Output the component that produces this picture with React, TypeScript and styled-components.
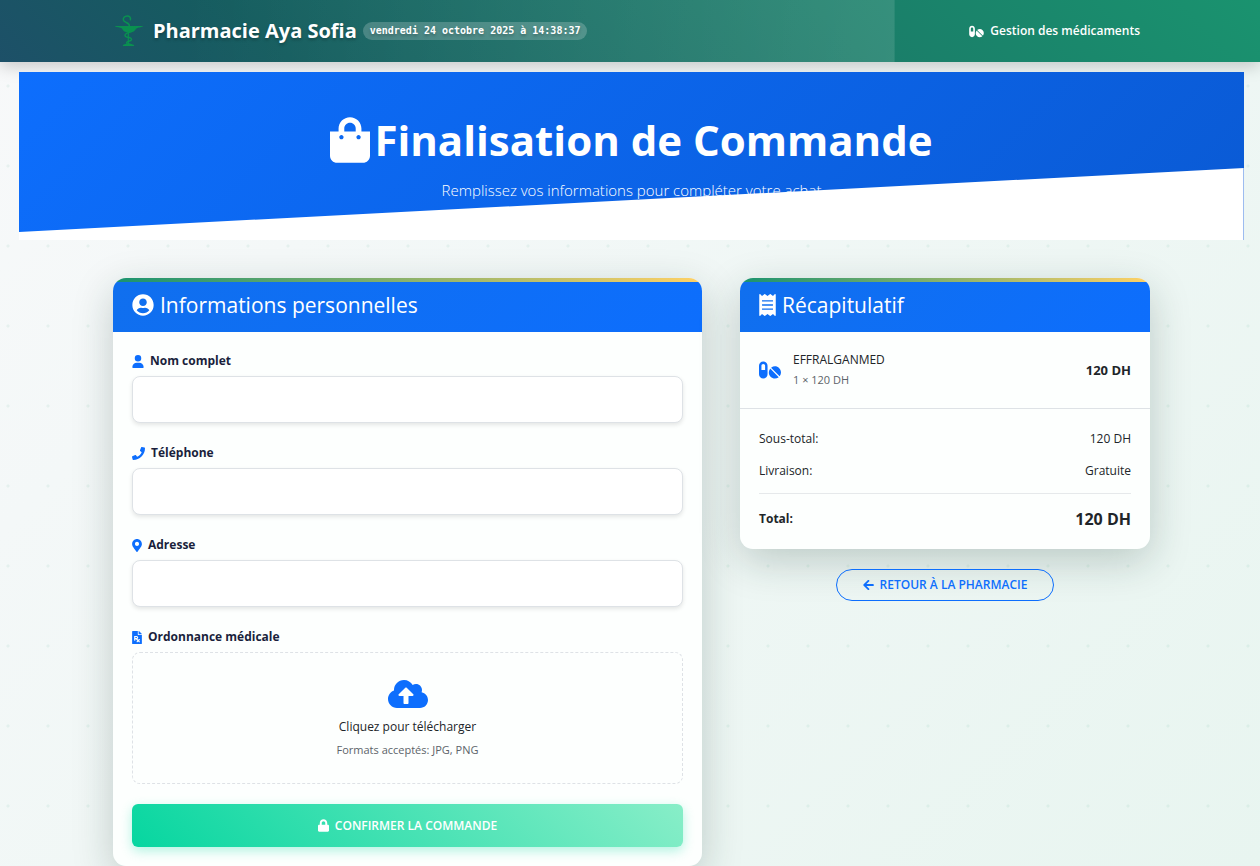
import React from "react";
import styled, { createGlobalStyle } from "styled-components";
import {
  FaArrowLeft,
  FaCloudUploadAlt,
  FaFilePrescription,
  FaLock,
  FaMapMarkerAlt,
  FaPhone,
  FaPills,
  FaReceipt,
  FaShoppingBag,
  FaUserCircle,
} from "react-icons/fa";
import { FaUser } from "react-icons/fa6";

const blue = "#0d6efd";
const ink = "#212529";
const navy = "#1a1f3c";

const GlobalStyle = createGlobalStyle`
  *, *::before, *::after { box-sizing: border-box; }
  html { min-height: 100%; }
  body {
    margin: 0;
    min-height: 100vh;
    color: ${ink};
    font-family: "Open Sans", "Noto Sans", sans-serif;
    font-size: 12px;
    line-height: 20px;
    background:
      radial-gradient(circle at 8px 6px, rgba(26, 147, 111, 0.07) 1px, transparent 2px) 0 0 / 40px 80px,
      linear-gradient(135deg, #f8f9fa 0%, #f4f8f8 25%, #e8f5f0 100%);
  }
  h1, h2, p { margin: 0; }
  svg { display: block; flex: none; }
`;

const Glyph = styled.span<{ $w: number; $h: number }>`
  flex: none;
  color: ${blue};

  svg {
    width: ${(p) => p.$w}px;
    height: ${(p) => p.$h}px;
  }
`;

const PlainGlyph = styled(Glyph)`
  color: inherit;
`;

const Navbar = styled.header`
  height: 62px;
  color: #fff;
  background:
    linear-gradient(90deg, rgba(255, 255, 255, 0) 20%, rgba(255, 255, 255, 0.12) 100%) 0 0 / 71% 100% no-repeat,
    linear-gradient(45deg, #1d5068 0%, #155d5f 22%, #1a7d69 66%, #1a936f 100%);
  box-shadow: 0 4px 16px rgba(0, 0, 0, 0.2);
`;

const NavInner = styled.div`
  display: flex;
  align-items: center;
  justify-content: space-between;
  height: 100%;
  max-width: 1070px;
  margin: 0 auto;
  padding: 0 15px 0 18px;
`;

const Brand = styled.a`
  display: flex;
  align-items: center;
  color: #fff;
  text-decoration: none;
  font-size: 20px;
  font-weight: 700;
  text-shadow: 0 2px 3px rgba(0, 0, 0, 0.25);
`;

const BrandName = styled.span`
  margin: 0 6px 0 8px;
`;

const Clock = styled.time`
  padding: 0 7px;
  border-radius: 9px;
  background: rgba(255, 255, 255, 0.2);
  font: 700 10px/18px "DejaVu Sans Mono", monospace;
`;

const NavLink = styled.a`
  display: flex;
  align-items: center;
  gap: 6px;
  padding-right: 10px;
  color: #fff;
  font-size: 12px;
  font-weight: 600;
  text-decoration: none;
`;

const Hero = styled.section`
  position: relative;
  height: 168px;
  margin: 10px 16px 38px 19px;
  padding-top: 38px;
  color: #fff;
  text-align: center;
  background: linear-gradient(135deg, #0d6efd 0%, #0a5ad4 100%);

  &::after {
    content: "";
    position: absolute;
    inset: 96px 0 0 0;
    border-right: 1px solid #9dbcf0;
    background: #fff;
    clip-path: polygon(0 64px, 100% 0, 100% 100%, 0 100%);
  }
`;

const HeroTitle = styled.h1`
  display: flex;
  align-items: center;
  justify-content: center;
  gap: 4px;
  font-size: 42px;
  line-height: 60px;
  font-weight: 700;
`;

const HeroText = styled.p`
  margin-top: 10px;
  font-size: 15px;
  font-weight: 300;
`;

const Columns = styled.main`
  display: grid;
  grid-template-columns: 589fr 410fr;
  gap: 38px;
  align-items: start;
  max-width: 1070px;
  margin: 0 auto;
  padding: 0 15px 0 18px;
`;

const Card = styled.section`
  overflow: hidden;
  border-radius: 13px;
  background: #fdfffe;
  box-shadow: 0 12px 40px rgba(20, 50, 40, 0.22);

  &::before {
    content: "";
    display: block;
    height: 4px;
    background: linear-gradient(90deg, #1a936f, #ffd166);
  }
`;

const CardTitle = styled.h2`
  display: flex;
  align-items: center;
  gap: 6px;
  padding: 8px 19px 12px;
  color: #fff;
  background: linear-gradient(135deg, #106fee, #0d6efd);
  font-size: 21px;
  line-height: 30px;
  font-weight: 400;
`;

const Form = styled.form`
  display: flex;
  flex-direction: column;
  gap: 20px;
  padding: 19px;
`;

const Field = styled.div`
  display: flex;
  flex-direction: column;
  gap: 5px;
`;

const Label = styled.label`
  display: flex;
  align-items: center;
  gap: 6px;
  color: ${navy};
  font-size: 12px;
  font-weight: 700;
`;

const TextInput = styled.input`
  width: 100%;
  height: 47px;
  padding: 0 16px;
  border: 1px solid #dee2e6;
  border-radius: 8px;
  background: #fff;
  font: inherit;
  box-shadow: 0 2px 4px rgba(0, 0, 0, 0.1);
`;

const DropZone = styled.label`
  display: flex;
  flex-direction: column;
  align-items: center;
  height: 132px;
  padding-top: 25px;
  border: 1px dashed #dee2e6;
  border-radius: 8px;
  cursor: pointer;
`;

const HiddenFile = styled.input`
  position: absolute;
  width: 1px;
  height: 1px;
  opacity: 0;
`;

const Muted = styled.span`
  color: #5c6369;
  font-size: 11px;
`;

const DropText = styled.span`
  margin: 7px 0 3px;
`;

const Submit = styled.button`
  display: flex;
  align-items: center;
  justify-content: center;
  gap: 6px;
  height: 43px;
  border: 0;
  border-radius: 6px;
  color: #fff;
  background: linear-gradient(45deg, #06d6a0, #88eec8);
  box-shadow: 0 4px 12px rgba(6, 214, 160, 0.3);
  font: 600 12px/20px "Open Sans", sans-serif;
  cursor: pointer;
`;

const Item = styled.div`
  display: flex;
  align-items: center;
  gap: 12px;
  padding: 18px 19px;
  border-bottom: 1px solid #dee2e6;
`;

const ItemText = styled.div`
  display: flex;
  flex: 1;
  flex-direction: column;
`;

const Price = styled.strong`
  font-size: 13px;
`;

const Totals = styled.dl`
  display: flex;
  flex-direction: column;
  gap: 12px;
  margin: 0;
  padding: 20px 19px;
`;

const Row = styled.div<{ $total?: boolean }>`
  display: flex;
  align-items: center;
  justify-content: space-between;
  padding-top: ${(p) => (p.$total ? "15px" : "0")};
  border-top: ${(p) => (p.$total ? "1px solid #e6e9eb" : "0")};
  font-weight: ${(p) => (p.$total ? 700 : 400)};

  dd {
    margin: 0;
    font-size: ${(p) => (p.$total ? "16px" : "12px")};
  }
`;

const Aside = styled.aside`
  display: flex;
  flex-direction: column;
  gap: 20px;
`;

const BackLink = styled.a`
  display: flex;
  align-items: center;
  align-self: center;
  gap: 6px;
  height: 32px;
  padding: 0 26px;
  border: 1px solid ${blue};
  border-radius: 16px;
  color: ${blue};
  font-size: 12px;
  font-weight: 600;
  text-decoration: none;
`;

const PharmacyLogo = () => (
  <svg width="32" height="32" viewBox="0 0 32 32" fill="none" stroke="#0a9150" strokeLinecap="round" aria-hidden="true">
    <path d="M17.4 4.8C18 2.5 16.5 0.9 14.2 0.9C11.5 0.9 9.9 3 10.4 5.2C11 7.8 16.5 7.5 16.3 10.8" strokeWidth="1.5" />
    <path d="M1.5 11H30.5C28 13 25 11.8 23 14C21.5 16.5 19 17.5 16 17.5C12.5 17.5 9.8 16 9 13.5C7 12 4 12.8 1.5 11Z" fill="#0a9150" stroke="none" />
    <path d="M15.3 17V28.5L10 30.5H21L15.3 28.5" strokeWidth="1.2" fill="#0a9150" />
    <path d="M21.5 12C23.5 18 11.5 16.5 12 20.5C12.3 23.5 19 21.5 18.5 24.5C18 27 13.5 25.5 13.5 28" strokeWidth="1.4" />
  </svg>
);

const fields = [
  { id: "nom", label: "Nom complet", icon: <FaUser />, width: 12, type: "text" },
  { id: "telephone", label: "Téléphone", icon: <FaPhone />, width: 13, type: "tel" },
  { id: "adresse", label: "Adresse", icon: <FaMapMarkerAlt />, width: 10, type: "text" },
];

export default function App() {
  return (
    <>
      <GlobalStyle />
      <Navbar>
        <NavInner>
          <Brand href="#">
            <PharmacyLogo />
            <BrandName>Pharmacie Aya Sofia</BrandName>
            <Clock dateTime="2025-10-24T14:38:37">vendredi 24 octobre 2025 à 14:38:37</Clock>
          </Brand>
          <nav>
            <NavLink href="#medicaments">
              <PlainGlyph $w={15} $h={13}><FaPills /></PlainGlyph>
              Gestion des médicaments
            </NavLink>
          </nav>
        </NavInner>
      </Navbar>

      <Hero>
        <HeroTitle>
          <PlainGlyph $w={40} $h={46}><FaShoppingBag /></PlainGlyph>
          Finalisation de Commande
        </HeroTitle>
        <HeroText>Remplissez vos informations pour compléter votre achat</HeroText>
      </Hero>

      <Columns>
        <Card>
          <CardTitle>
            <PlainGlyph $w={22} $h={22}><FaUserCircle /></PlainGlyph>
            Informations personnelles
          </CardTitle>
          <Form>
            {fields.map((f) => (
              <Field key={f.id}>
                <Label htmlFor={f.id}>
                  <Glyph $w={f.width} $h={13}>{f.icon}</Glyph>
                  {f.label}
                </Label>
                <TextInput id={f.id} name={f.id} type={f.type} />
              </Field>
            ))}
            <Field>
              <Label htmlFor="ordonnance">
                <Glyph $w={10} $h={13}><FaFilePrescription /></Glyph>
                Ordonnance médicale
              </Label>
              <DropZone htmlFor="ordonnance">
                <Glyph $w={40} $h={32}><FaCloudUploadAlt /></Glyph>
                <DropText>Cliquez pour télécharger</DropText>
                <Muted>Formats acceptés: JPG, PNG</Muted>
                <HiddenFile id="ordonnance" type="file" accept=".jpg,.png" />
              </DropZone>
            </Field>
            <Submit type="submit">
              <PlainGlyph $w={11} $h={13}><FaLock /></PlainGlyph>
              CONFIRMER LA COMMANDE
            </Submit>
          </Form>
        </Card>

        <Aside>
          <Card>
            <CardTitle>
              <PlainGlyph $w={17} $h={22}><FaReceipt /></PlainGlyph>
              Récapitulatif
            </CardTitle>
            <Item>
              <Glyph $w={22} $h={20}><FaPills /></Glyph>
              <ItemText>
                <span>EFFRALGANMED</span>
                <Muted>1 × 120 DH</Muted>
              </ItemText>
              <Price>120 DH</Price>
            </Item>
            <Totals>
              <Row>
                <dt>Sous-total:</dt>
                <dd>120 DH</dd>
              </Row>
              <Row>
                <dt>Livraison:</dt>
                <dd>Gratuite</dd>
              </Row>
              <Row $total>
                <dt>Total:</dt>
                <dd>120 DH</dd>
              </Row>
            </Totals>
          </Card>
          <BackLink href="#pharmacie">
            <PlainGlyph $w={11} $h={12}><FaArrowLeft /></PlainGlyph>
            RETOUR À LA PHARMACIE
          </BackLink>
        </Aside>
      </Columns>
    </>
  );
}
